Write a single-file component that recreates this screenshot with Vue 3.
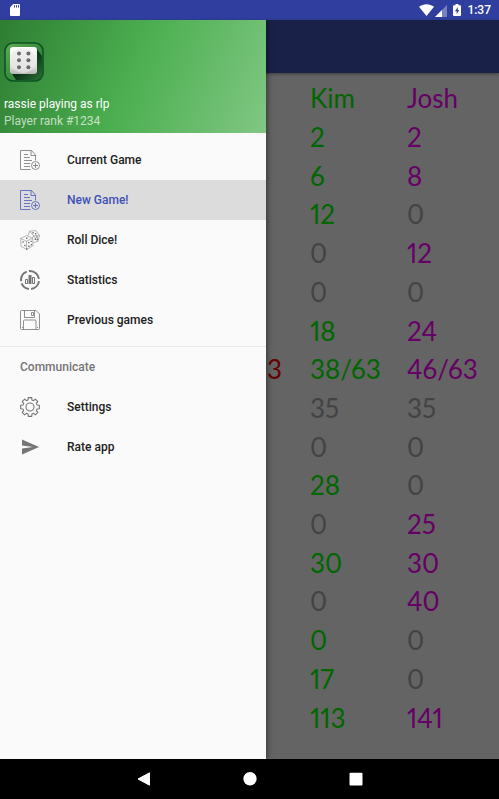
<script setup>
import { ref } from 'vue'

const selected = ref('New Game!')

const mainItems = [
  { label: 'Current Game', icon: 'doc' },
  { label: 'New Game!', icon: 'doc' },
  { label: 'Roll Dice!', icon: 'dice' },
  { label: 'Statistics', icon: 'stats' },
  { label: 'Previous games', icon: 'disk' },
]
const moreItems = [
  { label: 'Settings', icon: 'gear' },
  { label: 'Rate app', icon: 'send' },
]
const groups = [
  { title: '', items: mainItems },
  { title: 'Communicate', items: moreItems },
]

const rows = [
  { kim: '2', josh: '2' },
  { kim: '6', josh: '8' },
  { kim: '12', josh: '0', joshOff: true },
  { kim: '0', josh: '12', kimOff: true },
  { kim: '0', josh: '0', kimOff: true, joshOff: true },
  { kim: '18', josh: '24' },
  { edge: '3', kim: '38/63', josh: '46/63' },
  { kim: '35', josh: '35', kimOff: true, joshOff: true },
  { kim: '0', josh: '0', kimOff: true, joshOff: true },
  { kim: '28', josh: '0', joshOff: true },
  { kim: '0', josh: '25', kimOff: true },
  { kim: '30', josh: '30' },
  { kim: '0', josh: '40', kimOff: true },
  { kim: '0', josh: '0', joshOff: true },
  { kim: '17', josh: '0', joshOff: true },
  { kim: '113', josh: '141' },
]

const gearPath = (() => {
  const pts = []
  const teeth = 8
  for (let i = 0; i < teeth; i++) {
    const mid = (i / teeth) * Math.PI * 2
    for (const [off, r] of [[-0.27, 7.3], [-0.19, 9.5], [0.19, 9.5], [0.27, 7.3]]) {
      pts.push(`${(10 + r * Math.sin(mid + off)).toFixed(2)} ${(10 - r * Math.cos(mid + off)).toFixed(2)}`)
    }
  }
  return `M${pts.join('L')}Z`
})()
</script>

<template>
  <div class="screen">
    <header class="status">
      <svg class="sd" viewBox="0 0 10 12">
        <path d="M3.2 0H9a1 1 0 0 1 1 1v10a1 1 0 0 1-1 1H1a1 1 0 0 1-1-1V3.4z" fill="#fff" />
        <path d="M4.5 1.2v2.3M6.5 1.2v2.3M8.5 1.2v2.3" stroke="#303f9f" stroke-width="1" />
      </svg>
      <div class="signals">
        <svg class="wifi" viewBox="0 0 15 12">
          <path d="M0 2.8C4.400-.6 10.600-.6 15 2.800L7.500 12z" fill="#fff" />
        </svg>
        <svg class="cell" viewBox="0 0 12 12">
          <path d="M12 0v12H0z" fill="#fff" fill-opacity=".35" />
          <path d="M7 5v7H0z" fill="#fff" />
        </svg>
        <svg class="battery" viewBox="0 0 8 12">
          <path d="M2.500 0h3v1.200H7a1 1 0 0 1 1 1V11a1 1 0 0 1-1 1H1a1 1 0 0 1-1-1V2.200a1 1 0 0 1 1-1h1.500z" fill="#fff" />
          <path d="M4.800 3L2 7.200h1.700V10.300L6.200 6H4.800z" fill="#303f9f" />
        </svg>
        <span class="clock">1:37</span>
      </div>
    </header>

    <div class="stage">
      <main class="page">
        <div class="appbar"></div>
        <table class="scores">
          <colgroup>
            <col class="wide" />
            <col class="wide" />
            <col />
          </colgroup>
          <tbody>
            <tr>
              <td></td>
              <th class="kim" scope="col">Kim</th>
              <th class="josh" scope="col">Josh</th>
            </tr>
            <tr v-for="(row, i) in rows" :key="i">
              <td class="edge">{{ row.edge }}</td>
              <td class="kim" :class="{ off: row.kimOff }">{{ row.kim }}</td>
              <td class="josh" :class="{ off: row.joshOff }">{{ row.josh }}</td>
            </tr>
          </tbody>
        </table>
      </main>

      <aside class="drawer">
        <div class="profile">
          <svg class="logo" viewBox="0 0 40 40">
            <defs>
              <linearGradient id="logoBack" x1="0" y1="0" x2="1" y2="1">
                <stop offset="0" stop-color="#5fae55" />
                <stop offset=".5" stop-color="#3c8c41" />
                <stop offset="1" stop-color="#2d7a38" />
              </linearGradient>
              <linearGradient id="logoShade" x1="0" y1="0" x2="1" y2="1">
                <stop offset=".4" stop-color="#04240f" />
                <stop offset="1" stop-color="#2a7336" />
              </linearGradient>
              <linearGradient id="logoDie" x1="0" y1="0" x2="0" y2="1">
                <stop offset="0" stop-color="#fff" />
                <stop offset=".75" stop-color="#dedede" />
                <stop offset="1" stop-color="#b5b5b5" />
              </linearGradient>
            </defs>
            <rect x="1" y="1" width="38" height="38" rx="8" fill="url(#logoBack)" />
            <path d="M32 6L38 14V31a7 7 0 0 1-7 7H12L7 30z" fill="url(#logoShade)" />
            <rect x="1" y="1" width="38" height="38" rx="8" fill="none" stroke="#0d5323" stroke-width="1.600" />
            <rect x="6" y="5" width="27" height="27" rx="3" fill="url(#logoDie)" />
            <circle cx="19" cy="18.500" r="12.500" fill="#e9e9e9" fill-opacity=".6" />
            <g fill="#6b6b6b">
              <circle cx="15" cy="11.500" r="2" /><circle cx="24.400" cy="11.500" r="2" />
              <circle cx="15" cy="18.300" r="2" /><circle cx="24.400" cy="18.300" r="2" />
              <circle cx="15" cy="25.200" r="2" /><circle cx="24.400" cy="25.200" r="2" />
            </g>
          </svg>
          <p class="name">rassie playing as rlp</p>
          <p class="rank">Player rank #1234</p>
        </div>

        <nav class="menu">
          <section v-for="group in groups" :key="group.title" class="group">
            <h2 v-if="group.title" class="title">{{ group.title }}</h2>
            <a
              v-for="item in group.items"
              :key="item.label"
              href="#"
              class="item"
              :class="{ active: item.label === selected }"
              @click.prevent="selected = item.label"
            >
              <svg class="icon" viewBox="0 0 20 20">
                <g v-if="item.icon === 'doc'" class="thin">
                  <path d="M10.500 19.500H.5V.5H11.500L15.500 5V10.500M11 .5V5.500H15.500" />
                  <path d="M4 4.500H8M4 7.500H10M4 10.500H12M4 13.500H10M4 16.500H10" />
                  <circle cx="15.500" cy="15.500" r="4" />
                  <path d="M15.500 13V18M13 15.500H18" />
                </g>
                <g v-else-if="item.icon === 'dice'" class="fine">
                  <path d="M.7 8.500L6.500 5.600L12.600 8.200L13 15.700L6.600 19.500L.9 16.200ZM.7 8.500L6.600 11.200L12.600 8.200M6.600 11.200V19.500" />
                  <path d="M8 5.500L9.700 1.200L16 .6L19.500 5.500L17.800 11.400L13.200 12.600M9.700 1.200L13.700 5.800L19.500 5.500M13.700 5.800L12.200 8.200M13.700 5.800L17.800 11.400" />
                  <path class="dots" d="M6 8.300h1.400M2.300 12h1.400M4.200 15.500h1.400M8 12.600h1.400M10.500 11.400h1.400M8.200 16.300h1.400M10.700 14.800h1.400M6 19h1.400M12.300 2.700h1.400M15 3.700h1.400M16.200 7h1.400M14.600 9.200h1.400M17 9.300h1.200" />
                </g>
                <g v-else-if="item.icon === 'stats'">
                  <circle class="ring" cx="10" cy="10" r="9" pathLength="100" />
                  <path d="M5.500 13.500V9.500H7.500V13.500ZM12.500 13.500V7.500H14.500V13.500Z" />
                  <path class="bar" d="M10 14V5" />
                </g>
                <g v-else-if="item.icon === 'disk'" class="thin">
                  <path d="M1.500 .5H16L19.500 4V18.500a1 1 0 0 1-1 1H1.500a1 1 0 0 1-1-1V1.500a1 1 0 0 1 1-1Z" />
                  <path d="M4.500 .5V7.500H14.500V.5M11.500 2.500H13.500V5.500H11.500ZM3.500 19.500V11a1 1 0 0 1 1-1H15a1 1 0 0 1 1 1V19.500M2 17.500h1M17 17.500h1" />
                </g>
                <g v-else-if="item.icon === 'gear'">
                  <path class="gear" :d="gearPath" />
                  <circle class="gear" cx="10" cy="10" r="4" />
                </g>
                <path v-else class="solid" d="M2 2.500L19 10L2 17.500V11.600L13 10L2 8.400Z" />
              </svg>
              <span>{{ item.label }}</span>
            </a>
          </section>
        </nav>
      </aside>
    </div>

    <footer class="navbar">
      <button type="button" aria-label="Back">
        <svg viewBox="0 0 14 14"><path d="M12.500 .8V13.200L1 7Z" fill="#fff" stroke="#fff" stroke-linejoin="round" /></svg>
      </button>
      <button type="button" aria-label="Home">
        <svg viewBox="0 0 14 14"><circle cx="7" cy="6.700" r="6.700" fill="#fff" /></svg>
      </button>
      <button type="button" aria-label="Recent apps">
        <svg viewBox="0 0 14 14"><rect x=".5" y=".8" width="13" height="12.600" rx="1" fill="#fff" /></svg>
      </button>
    </footer>
  </div>
</template>

<style>
body {
  margin: 0;
}
</style>

<style scoped>
.screen {
  display: flex;
  flex-direction: column;
  min-height: 100vh;
  font-family: Roboto, "Liberation Sans", sans-serif;
  font-size: 12px;
}
.status {
  display: flex;
  align-items: center;
  justify-content: space-between;
  height: 20px;
  padding: 0 8px 0 10px;
  background: #303f9f;
  color: #fff;
}
.sd {
  width: 10px;
  height: 12px;
}
.signals {
  display: flex;
  align-items: center;
}
.wifi {
  width: 15px;
  height: 12px;
}
.cell {
  width: 12px;
  height: 12px;
  margin: 1px 6px 0 1px;
}
.battery {
  width: 8px;
  height: 12px;
  margin-right: 6px;
}
.clock {
  font-size: 12px;
  font-weight: 500;
  line-height: 20px;
}
.stage {
  display: grid;
  flex: 1;
  grid-template-columns: minmax(0, 1fr);
}
.page,
.drawer {
  grid-area: 1 / 1;
}
.page {
  display: flex;
  flex-direction: column;
  background: #646464;
}
.appbar {
  height: 53px;
  background: #1a2148;
  box-shadow: 0 1px 3px rgba(0, 0, 0, 0.4);
}
.scores {
  flex: 1;
  align-self: flex-end;
  width: 286px;
  margin: 6px 0 22px;
  border-collapse: collapse;
  table-layout: fixed;
  font-family: Lato, sans-serif;
  font-size: 26px;
  font-variant-numeric: proportional-nums;
  line-height: 32px;
}
.scores .wide {
  width: 97px;
}
.scores th,
.scores td {
  padding: 0;
  font-weight: 400;
  text-align: left;
}
.scores .kim {
  color: #060;
}
.scores .josh {
  color: #606;
}
.scores .off {
  color: #434343;
}
.scores .edge {
  padding-right: 28px;
  color: #600;
  text-align: right;
}
.drawer {
  z-index: 1;
  width: min(266px, 85vw);
  background: #fafafa;
  box-shadow: 1px 0 6px rgba(0, 0, 0, 0.5);
  clip-path: inset(0 -12px 0 0);
}
.profile {
  padding: 22px 4px 3px;
  background: linear-gradient(113deg, #2e7d32, #4caf50 50%, #81c784);
  color: #fff;
}
.logo {
  display: block;
  width: 40px;
  height: 40px;
  margin-bottom: 14px;
}
.profile p {
  margin: 0;
  line-height: 17px;
}
.profile .rank {
  color: rgba(255, 255, 255, 0.7);
}
.menu {
  padding-top: 7px;
}
.group + .group {
  margin-top: 6px;
  border-top: 1px solid #e9e9e9;
}
.title {
  margin: 0;
  padding-left: 20px;
  color: #757575;
  font-size: 12px;
  font-weight: 500;
  line-height: 40px;
}
.item {
  display: flex;
  align-items: center;
  gap: 27px;
  height: 40px;
  padding-left: 20px;
  color: #212121;
  font-weight: 500;
  text-decoration: none;
}
.item.active {
  background: #dcdcdc;
  color: #3f51b5;
}
.icon {
  width: 20px;
  height: 20px;
  color: #757575;
  fill: none;
  stroke: currentColor;
  stroke-width: 1;
}
.active .icon {
  color: #4a5abb;
}
.icon .thin {
  stroke-width: 0.8;
}
.icon .fine {
  stroke-width: 0.5;
}
.icon .dots {
  stroke-width: 1.4;
}
.icon .ring {
  stroke-width: 2;
  stroke-dasharray: 21 4 17 4 21 4 25 4;
  stroke-dashoffset: -2;
}
.icon .bar {
  stroke-width: 3;
}
.icon .gear {
  stroke-width: 1.1;
  stroke-linejoin: round;
}
.icon .solid {
  fill: currentColor;
  stroke: none;
}
.navbar {
  display: flex;
  align-items: center;
  justify-content: center;
  gap: 66px;
  height: 40px;
  background: #000;
}
.navbar button {
  display: grid;
  place-items: center;
  width: 40px;
  height: 40px;
  padding: 0;
  border: 0;
  background: none;
}
.navbar svg {
  width: 14px;
  height: 14px;
}
</style>
